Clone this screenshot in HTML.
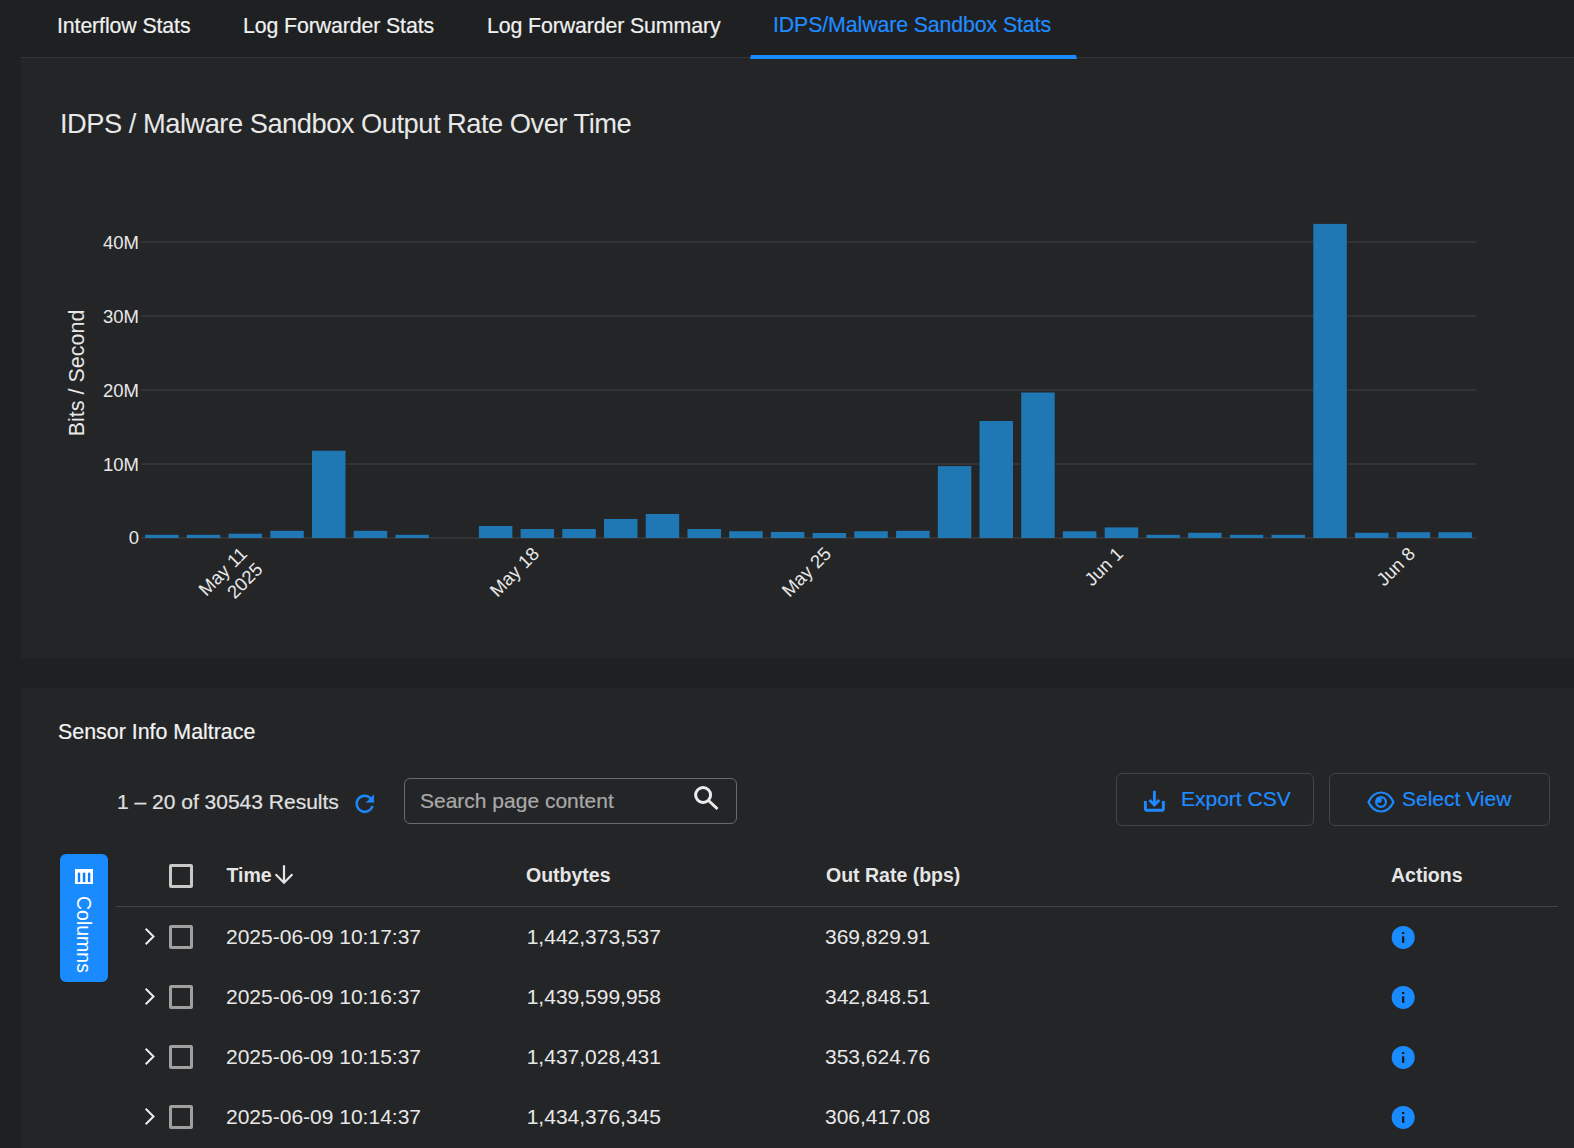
<!DOCTYPE html>
<html><head><meta charset="utf-8">
<style>
html,body{margin:0;padding:0;width:1574px;height:1148px;overflow:hidden;background:#1f2022;font-family:"Liberation Sans",sans-serif;}
.abs{position:absolute;white-space:nowrap;}
.tab,.t21{-webkit-text-stroke:0.2px currentColor;}
.tab{position:absolute;top:11px;font-size:21.3px;letter-spacing:-0.1px;line-height:30px;color:#f0f0f0;}
#tabline{position:absolute;left:21px;top:57px;width:1553px;height:1px;background:#333436;}
#p1{position:absolute;left:21px;top:58px;width:1553px;height:600px;background:#242527;}
#p2{position:absolute;left:21px;top:688px;width:1553px;height:460px;background:#242527;}
#ul{position:absolute;left:750px;top:55px;width:327px;height:4px;background:#1a8aff;clip-path:polygon(1px 0,calc(100% - 1px) 0,100% 100%,0 100%);}
.t21{font-size:21px;line-height:24px;}
.btn{position:absolute;top:773px;height:53px;border:1px solid #444547;border-radius:6px;box-sizing:border-box;}
.cb{position:absolute;left:169px;width:24px;height:24px;box-sizing:border-box;border:3px solid #a0a0a0;border-radius:2px;}
.hdr{position:absolute;top:862.5px;font-size:19.5px;line-height:24px;font-weight:bold;color:#e6e6e6;}
.cell{position:absolute;font-size:21px;line-height:24px;color:#e8e8e8;}
</style></head><body>
<div class="tab" style="left:57px">Interflow Stats</div>
<div class="tab" style="left:243px">Log Forwarder Stats</div>
<div class="tab" style="left:487px">Log Forwarder Summary</div>
<div class="tab" style="left:773px;top:10px;color:#1f8cff">IDPS/Malware Sandbox Stats</div>
<div id="tabline"></div>
<div id="p1"></div>
<div id="ul"></div>
<div class="abs" style="left:60px;top:108px;font-size:27.3px;letter-spacing:-0.5px;line-height:32px;color:#e8e8e8">IDPS / Malware Sandbox Output Rate Over Time</div>
<svg class="abs" style="left:0;top:0" width="1574" height="660">
<g stroke="#38393b" stroke-width="1.4">
<line x1="141" y1="242" x2="1476" y2="242"/>
<line x1="141" y1="316" x2="1476" y2="316"/>
<line x1="141" y1="390" x2="1476" y2="390"/>
<line x1="141" y1="464" x2="1476" y2="464"/>
<line x1="141" y1="538" x2="1476" y2="538"/>
</g>
<g fill="#1f77b4">
<rect x="145.1" y="534.8" width="33.5" height="3.2"/>
<rect x="186.8" y="534.8" width="33.5" height="3.2"/>
<rect x="228.5" y="533.7" width="33.5" height="4.3"/>
<rect x="270.3" y="530.8" width="33.5" height="7.2"/>
<rect x="312.0" y="450.7" width="33.5" height="87.3"/>
<rect x="353.7" y="530.8" width="33.5" height="7.2"/>
<rect x="395.4" y="534.8" width="33.5" height="3.2"/>
<rect x="478.9" y="526.0" width="33.5" height="12.0"/>
<rect x="520.6" y="529.0" width="33.5" height="9.0"/>
<rect x="562.3" y="529.0" width="33.5" height="9.0"/>
<rect x="604.0" y="519.0" width="33.5" height="19.0"/>
<rect x="645.7" y="514.0" width="33.5" height="24.0"/>
<rect x="687.5" y="529.0" width="33.5" height="9.0"/>
<rect x="729.2" y="531.2" width="33.5" height="6.8"/>
<rect x="770.9" y="531.9" width="33.5" height="6.1"/>
<rect x="812.6" y="533.0" width="33.5" height="5.0"/>
<rect x="854.3" y="531.2" width="33.5" height="6.8"/>
<rect x="896.1" y="530.8" width="33.5" height="7.2"/>
<rect x="937.8" y="466.1" width="33.5" height="71.9"/>
<rect x="979.5" y="421.0" width="33.5" height="117.0"/>
<rect x="1021.2" y="392.5" width="33.5" height="145.5"/>
<rect x="1062.9" y="531.3" width="33.5" height="6.7"/>
<rect x="1104.7" y="527.4" width="33.5" height="10.6"/>
<rect x="1146.4" y="534.8" width="33.5" height="3.2"/>
<rect x="1188.1" y="532.8" width="33.5" height="5.2"/>
<rect x="1229.8" y="534.8" width="33.5" height="3.2"/>
<rect x="1271.5" y="534.8" width="33.5" height="3.2"/>
<rect x="1313.3" y="223.9" width="33.5" height="314.1"/>
<rect x="1355.0" y="532.8" width="33.5" height="5.2"/>
<rect x="1396.7" y="532.2" width="33.5" height="5.8"/>
<rect x="1438.4" y="532.2" width="33.5" height="5.8"/>
</g>
<g fill="#e8e8e8" font-family="Liberation Sans" font-size="18.5" text-anchor="end">
<text x="139" y="249">40M</text>
<text x="139" y="323">30M</text>
<text x="139" y="397">20M</text>
<text x="139" y="471">10M</text>
<text x="139" y="544">0</text>
</g>
<text transform="translate(84.2,373) rotate(-90)" fill="#e8e8e8" font-family="Liberation Sans" font-size="21.5" text-anchor="middle">Bits / Second</text>
<g fill="#e8e8e8" font-family="Liberation Sans" font-size="18.5" text-anchor="end">
<g transform="translate(248.3,555) rotate(-45)"><text x="0" y="0">May 11</text><text x="0" y="22">2025</text></g>
<g transform="translate(540.3,555) rotate(-45)"><text x="0" y="0">May 18</text></g>
<g transform="translate(832.3,555) rotate(-45)"><text x="0" y="0">May 25</text></g>
<g transform="translate(1124.3,555) rotate(-45)"><text x="0" y="0">Jun 1</text></g>
<g transform="translate(1416.3,555) rotate(-45)"><text x="0" y="0">Jun 8</text></g>
</g>
</svg>
<div id="p2"></div>
<div class="abs t21" style="left:58px;top:720px;font-size:21.4px;color:#f2f2f2">Sensor Info Maltrace</div>
<div class="abs t21" style="left:117px;top:790px;color:#e0e0e0">1 – 20 of 30543 Results</div>
<svg class="abs" style="left:351px;top:789.8px" width="27.5" height="27.5" viewBox="0 0 24 24"><path fill="#1e88ff" stroke="#1e88ff" stroke-width="0.2" d="M17.65 6.35A7.958 7.958 0 0 0 12 4c-4.42 0-7.99 3.58-7.99 8s3.57 8 7.99 8c3.73 0 6.84-2.55 7.73-6h-2.08A5.99 5.99 0 0 1 12 18c-3.31 0-6-2.69-6-6s2.69-6 6-6c1.66 0 3.14.69 4.22 1.78L13 11h7V4l-2.35 2.35z"/></svg>
<div class="abs" style="left:404px;top:778px;width:333px;height:46px;box-sizing:border-box;border:1.3px solid #6a6a6a;border-radius:6px"></div>
<div class="abs t21" style="left:420px;top:789px;color:#a9a9a9">Search page content</div>
<svg class="abs" style="left:690px;top:782px" width="32" height="32" viewBox="0 0 32 32"><circle cx="13.1" cy="13" r="7.5" fill="none" stroke="#ececec" stroke-width="3"/><line x1="18.5" y1="18.5" x2="27.5" y2="27" stroke="#ececec" stroke-width="3"/></svg>
<div class="btn" style="left:1116px;width:198px"></div>
<div class="btn" style="left:1329px;width:221px"></div>
<svg class="abs" style="left:1142px;top:789px" width="26" height="26" viewBox="0 0 26 26"><g fill="none" stroke="#1e88ff" stroke-width="2.9"><path d="M3.4 12v7.4q0 1.9 1.9 1.9h14.2q1.9 0 1.9-1.9V12"/><path d="M12.4 1.8v14"/><path d="M7.5 11l4.9 5l4.9-5"/></g></svg>
<div class="abs t21" style="left:1181px;top:787px;color:#1f8cff">Export CSV</div>
<svg class="abs" style="left:1366px;top:789px" width="30" height="26" viewBox="0 0 30 26"><g fill="none" stroke="#1e88ff" stroke-width="2.2"><path d="M2.5 13C5.5 6.5 10 3.5 15 3.5S24.5 6.5 27.5 13C24.5 19.5 20 22.5 15 22.5S5.5 19.5 2.5 13z"/><circle cx="15" cy="13" r="4.9"/></g><circle cx="12.9" cy="10.9" r="2.9" fill="#1e88ff"/></svg>
<div class="abs t21" style="left:1402px;top:787px;color:#1f8cff">Select View</div>
<div class="abs" style="left:60px;top:854px;width:48px;height:128px;background:#1a8aff;border-radius:6px"></div>
<svg class="abs" style="left:75px;top:869px" width="18" height="15" viewBox="0 0 18 15"><rect width="18" height="15" fill="#fff"/><rect x="2.8" y="3.7" width="2.4" height="9.4" fill="#0a7cff"/><rect x="7.8" y="3.7" width="2.5" height="9.4" fill="#0a7cff"/><rect x="12.9" y="3.7" width="2.4" height="9.4" fill="#0a7cff"/></svg>
<div class="abs" style="left:72px;top:896px;font-size:19.5px;line-height:24px;color:#fff;transform-origin:0 0;transform:translate(24px,0) rotate(90deg)">Columns</div>
<div class="cb" style="top:864px;border-color:#c8c8c8"></div>
<div class="hdr" style="left:226.5px">Time</div>
<svg class="abs" style="left:272px;top:863px" width="24" height="24" viewBox="0 0 24 24"><g fill="none" stroke="#e6e6e6" stroke-width="2.2"><path d="M12 2.2v17.5M3.6 11.3l8.4 8.4l8.4-8.4"/></g></svg>
<div class="hdr" style="left:526px">Outbytes</div>
<div class="hdr" style="left:826px">Out Rate (bps)</div>
<div class="hdr" style="left:1391px">Actions</div>
<div class="abs" style="left:116px;top:906px;width:1442px;height:1px;background:#444547"></div>
<svg class="abs" style="left:141px;top:927px" width="18" height="20" viewBox="0 0 18 20"><path d="M4.7 1.7l7.8 7.8L4.7 17.3" fill="none" stroke="#ededed" stroke-width="2"/></svg>
<div class="cb" style="top:925px"></div>
<div class="cell" style="left:226px;top:924.5px">2025-06-09 10:17:37</div>
<div class="cell" style="left:526.7px;top:924.5px">1,442,373,537</div>
<div class="cell" style="left:825px;top:924.5px">369,829.91</div>
<svg class="abs" style="left:1391px;top:925px" width="24" height="24" viewBox="0 0 24 24"><circle cx="12.2" cy="12.4" r="11.5" fill="#1a8aff"/><rect x="11" y="11.3" width="2.3" height="6.6" fill="#1a1b1d"/><rect x="11" y="7" width="2.3" height="2" fill="#1a1b1d"/></svg>
<svg class="abs" style="left:141px;top:987px" width="18" height="20" viewBox="0 0 18 20"><path d="M4.7 1.7l7.8 7.8L4.7 17.3" fill="none" stroke="#ededed" stroke-width="2"/></svg>
<div class="cb" style="top:985px"></div>
<div class="cell" style="left:226px;top:984.5px">2025-06-09 10:16:37</div>
<div class="cell" style="left:526.7px;top:984.5px">1,439,599,958</div>
<div class="cell" style="left:825px;top:984.5px">342,848.51</div>
<svg class="abs" style="left:1391px;top:985px" width="24" height="24" viewBox="0 0 24 24"><circle cx="12.2" cy="12.4" r="11.5" fill="#1a8aff"/><rect x="11" y="11.3" width="2.3" height="6.6" fill="#1a1b1d"/><rect x="11" y="7" width="2.3" height="2" fill="#1a1b1d"/></svg>
<svg class="abs" style="left:141px;top:1047px" width="18" height="20" viewBox="0 0 18 20"><path d="M4.7 1.7l7.8 7.8L4.7 17.3" fill="none" stroke="#ededed" stroke-width="2"/></svg>
<div class="cb" style="top:1045px"></div>
<div class="cell" style="left:226px;top:1044.5px">2025-06-09 10:15:37</div>
<div class="cell" style="left:526.7px;top:1044.5px">1,437,028,431</div>
<div class="cell" style="left:825px;top:1044.5px">353,624.76</div>
<svg class="abs" style="left:1391px;top:1045px" width="24" height="24" viewBox="0 0 24 24"><circle cx="12.2" cy="12.4" r="11.5" fill="#1a8aff"/><rect x="11" y="11.3" width="2.3" height="6.6" fill="#1a1b1d"/><rect x="11" y="7" width="2.3" height="2" fill="#1a1b1d"/></svg>
<svg class="abs" style="left:141px;top:1107px" width="18" height="20" viewBox="0 0 18 20"><path d="M4.7 1.7l7.8 7.8L4.7 17.3" fill="none" stroke="#ededed" stroke-width="2"/></svg>
<div class="cb" style="top:1105px"></div>
<div class="cell" style="left:226px;top:1104.5px">2025-06-09 10:14:37</div>
<div class="cell" style="left:526.7px;top:1104.5px">1,434,376,345</div>
<div class="cell" style="left:825px;top:1104.5px">306,417.08</div>
<svg class="abs" style="left:1391px;top:1105px" width="24" height="24" viewBox="0 0 24 24"><circle cx="12.2" cy="12.4" r="11.5" fill="#1a8aff"/><rect x="11" y="11.3" width="2.3" height="6.6" fill="#1a1b1d"/><rect x="11" y="7" width="2.3" height="2" fill="#1a1b1d"/></svg>
</body></html>
